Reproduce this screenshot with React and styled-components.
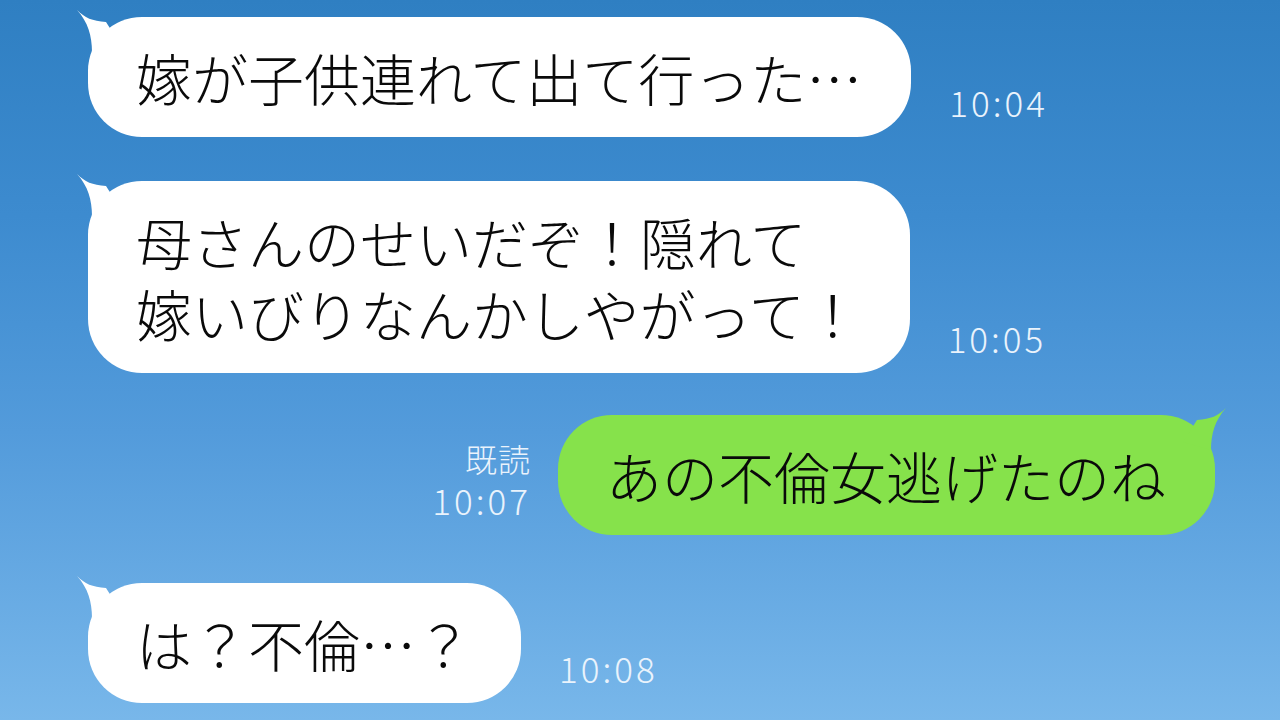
import React from "react";
import styled, { createGlobalStyle } from "styled-components";

const Global = createGlobalStyle`
  html, body { margin: 0; padding: 0; }
  body { width: 1280px; height: 720px; overflow: hidden; }
`;

const Screen = styled.div`
  width: 1280px;
  height: 720px;
  overflow: hidden;
  background: linear-gradient(180deg, #2f7fc2 0%, #3d8bcf 30%, #539bdb 60%, #78b7ea 100%);
  font-family: "Noto Sans CJK JP", "Noto Sans", sans-serif;
`;

const Thread = styled.div`
  display: flex;
  flex-direction: column;
  padding: 17px 0 0 0;
`;

const Row = styled.div`
  display: flex;
  align-items: flex-end;
  justify-content: ${(p) => (p.$mine ? "flex-end" : "flex-start")};
  padding: ${(p) => (p.$mine ? "0 65px 0 0" : "0 0 0 88px")};
  margin-top: ${(p) => p.$gap || 0}px;
  gap: ${(p) => (p.$mine ? 30 : 38)}px;
`;

const Bubble = styled.div`
  position: relative;
  background: ${(p) => (p.$mine ? "#86e24b" : "#ffffff")};
  color: #0a0a0a;
  font-size: 56px;
  line-height: 72px;
  font-weight: 300;
  padding: 24px 49px 24px 48px;
  border-radius: 54px;
  white-space: nowrap;
`;

const Tail = styled.svg`
  position: absolute;
  top: -9px;
  ${(p) => (p.$mine ? "right: -12px; transform: scaleX(-1);" : "left: -12px;")}
  width: 50px;
  height: 50px;
  fill: ${(p) => (p.$mine ? "#86e24b" : "#ffffff")};
`;

const Meta = styled.div`
  display: flex;
  flex-direction: column;
  align-items: flex-end;
  color: #eaf3fc;
  font-size: 35px;
  line-height: 41px;
  font-weight: 300;
  letter-spacing: 3px;
  margin-bottom: 15px;
  margin-right: ${(p) => (p.$mine ? -3 : 0)}px;
`;

const Read = styled.span`
  font-size: 32px;
  letter-spacing: 1px;
`;

const TailShape = ({ mine }) => (
  <Tail $mine={mine} viewBox="0 0 50 50">
    <path d="M1 2 C 9 10 16 13 30 14 L 44 36 L 16 44 C 16 28 12 14 1 2 Z" />
  </Tail>
);

const Message = ({ mine, gap, time, read, children }) => (
  <Row $mine={mine} $gap={gap}>
    {mine && (
      <Meta $mine>
        {read && <Read>既読</Read>}
        <span>{time}</span>
      </Meta>
    )}
    <Bubble $mine={mine}>
      <TailShape mine={mine} />
      {children}
    </Bubble>
    {!mine && (
      <Meta>
        <span>{time}</span>
      </Meta>
    )}
  </Row>
);

export default function App() {
  return (
    <>
      <Global />
      <Screen>
        <Thread>
          <Message time="10:04">嫁が子供連れて出て行った…</Message>
          <Message gap={44} time="10:05">
            母さんのせいだぞ！隠れて
            <br />
            嫁いびりなんかしやがって！
          </Message>
          <Message mine gap={42} time="10:07" read>
            あの不倫女逃げたのね
          </Message>
          <Message gap={48} time="10:08">は？不倫…？</Message>
        </Thread>
      </Screen>
    </>
  );
}
